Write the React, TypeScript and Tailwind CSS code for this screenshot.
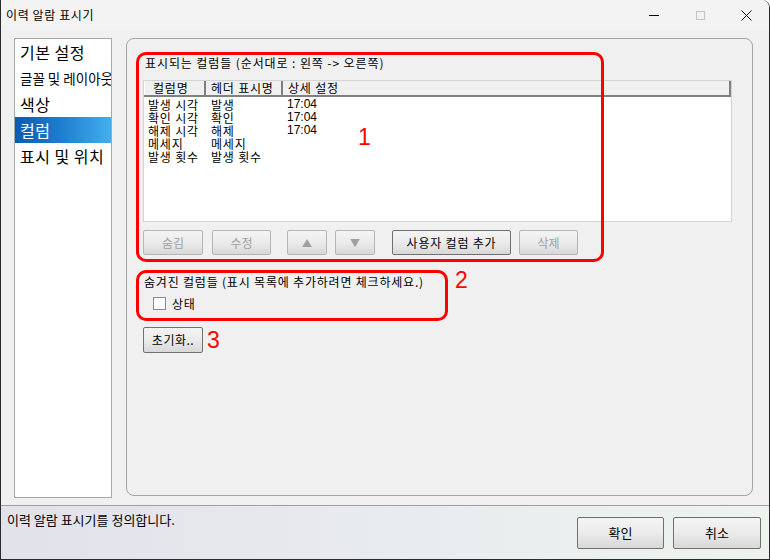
import React from "react";

const rows = [
  { name: "발생 시각", header: "발생", detail: "17:04" },
  { name: "확인 시각", header: "확인", detail: "17:04" },
  { name: "해제 시각", header: "해제", detail: "17:04" },
  { name: "메세지", header: "메세지", detail: "" },
  { name: "발생 횟수", header: "발생 횟수", detail: "" },
];

const menu = [
  { label: "기본 설정", size: "text-[16px] tracking-[0.5px]" },
  { label: "글꼴 및 레이아웃", size: "text-[13.5px]" },
  { label: "색상", size: "text-[16px] tracking-[0.5px]" },
  { label: "컬럼", size: "text-[16px] tracking-[0.5px]", active: true },
  { label: "표시 및 위치", size: "text-[16px] tracking-[0.5px]" },
];

function Btn({
  children,
  disabled,
  className,
}: {
  children: React.ReactNode;
  disabled?: boolean;
  className?: string;
}) {
  return (
    <button
      className={`h-[25px] rounded-[2px] border text-[12px] flex items-center justify-center bg-gradient-to-b from-[#f4f4f4] via-[#ebebeb] to-[#d8d8d8] ${
        disabled ? "border-[#b5b5b5] text-[#a0a0a0]" : "border-[#707070] text-black"
      } ${className ?? ""}`}
    >
      {children}
    </button>
  );
}

export default function App() {
  return (
    <div className="w-[770px] h-[560px] flex flex-col bg-[#f0f0f0] text-black font-['Noto_Sans_CJK_KR',sans-serif] overflow-hidden border-l border-r border-b border-[#2b2b2b] rounded-tr-[8px]">
      {/* title bar */}
      <div className="h-[30px] flex items-center bg-[#f3f3f3] shrink-0">
        <span className="pl-[5px] text-[12px] tracking-[0.6px]">이력 알람 표시기</span>
        <div className="ml-auto flex h-full">
          <div className="w-[46px] h-full flex items-center justify-center">
            <div className="w-[10px] h-[1px] bg-black" />
          </div>
          <div className="w-[46px] h-full flex items-center justify-center">
            <div className="w-[9px] h-[9px] border border-[#c4c4c4]" />
          </div>
          <div className="w-[46px] h-full flex items-center justify-center">
            <svg width="11" height="11" viewBox="0 0 11 11">
              <path d="M0.5 0.5 L10.5 10.5 M10.5 0.5 L0.5 10.5" stroke="#111" strokeWidth="1" />
            </svg>
          </div>
        </div>
      </div>

      {/* main */}
      <div className="flex h-[475px] shrink-0">
        {/* left menu */}
        <div className="ml-[13px] mt-[8px] w-[98px] h-[460px] bg-white border border-[#a8a8a8] overflow-hidden">
          {menu.map((m) => (
            <div
              key={m.label}
              className={`h-[26px] flex items-center pl-[5px] whitespace-nowrap ${m.size} ${
                m.active ? "bg-gradient-to-r from-[#0a5cb0] via-[#1f7fd0] to-[#44aef0] text-white" : ""
              }`}
            >
              {m.label}
            </div>
          ))}
        </div>

        {/* right panel */}
        <div className="relative ml-[14px] mt-[8px] w-[627px] h-[458px] border border-[#a4a4a4] rounded-[8px] pl-[16px] pt-[17px]">
          <div className="ml-[2px] text-[12px] leading-[14px] tracking-[0.9px]">
            표시되는 컬럼들 (순서대로 : 왼쪽 -&gt; 오른쪽)
          </div>

          {/* list view */}
          <div className="mt-[10px] w-[589px] h-[142px] bg-white border border-[#d4d4d4] text-[12px] tracking-[0.8px]">
            <div className="flex h-[16px] leading-[14px] bg-[#f0f0f0] border-b-2 border-[#808080]">
              <div className="w-[62px] pl-[8px] border-r-2 border-[#808080] border-l border-l-white">컬럼명</div>
              <div className="w-[77px] pl-[5px] border-r-2 border-[#808080] whitespace-nowrap">헤더 표시명</div>
              <div className="flex-1 pl-[5px] border-r-2 border-[#808080]">상세 설정</div>
            </div>
            <div className="pt-[1px]">
              {rows.map((r) => (
                <div key={r.name} className="flex h-[13px] leading-[13px]">
                  <div className="w-[62px] pl-[4px] whitespace-nowrap">{r.name}</div>
                  <div className="w-[80px] pl-[5px] whitespace-nowrap">{r.header}</div>
                  <div className="pl-[1px] tracking-normal font-['Liberation_Sans',sans-serif]">{r.detail}</div>
                </div>
              ))}
            </div>
          </div>

          {/* buttons */}
          <div className="flex mt-[8px]">
            <Btn disabled className="w-[60px]">숨김</Btn>
            <Btn disabled className="w-[59px] ml-[9px]">수정</Btn>
            <Btn disabled className="w-[40px] ml-[16px]">
              <span className="text-[10px] text-[#a0a0a0]">▲</span>
            </Btn>
            <Btn disabled className="w-[40px] ml-[8px]">
              <span className="text-[10px] text-[#a0a0a0]">▼</span>
            </Btn>
            <Btn className="w-[119px] ml-[17px] tracking-[0.8px]">사용자 컬럼 추가</Btn>
            <Btn disabled className="w-[59px] ml-[8px]">삭제</Btn>
          </div>

          {/* hidden columns */}
          <div className="mt-[20px] ml-[1px] text-[12px] leading-[14px] tracking-[0.8px]">
            숨겨진 컬럼들 (표시 목록에 추가하려면 체크하세요.)
          </div>
          <div className="flex items-center mt-[8px] ml-[10px] h-[13px]">
            <div className="w-[13px] h-[13px] bg-white border border-[#8a8a8a]" />
            <span className="ml-[6px] text-[12px] tracking-[0.8px]">상태</span>
          </div>

          {/* reset */}
          <div className="flex items-center mt-[17px]">
            <Btn className="w-[60px] h-[26px] tracking-[0.5px]">초기화..</Btn>
            <span className="ml-[4px] text-[23px] leading-[26px] text-[#ff0000] font-['Liberation_Sans',sans-serif]">3</span>
          </div>

          {/* annotations */}
          <div className="absolute left-[9px] top-[13px] w-[468px] h-[210px] border-[3px] border-[#ff0000] rounded-[10px]" />
          <div className="absolute left-[231px] top-[87px] text-[23px] leading-[23px] text-[#ff0000] font-['Liberation_Sans',sans-serif]">1</div>
          <div className="absolute left-[9px] top-[231px] w-[312px] h-[51px] border-[3px] border-[#ff0000] rounded-[10px]" />
          <div className="absolute left-[328px] top-[230px] text-[23px] leading-[23px] text-[#ff0000] font-['Liberation_Sans',sans-serif]">2</div>
        </div>
      </div>

      {/* status bar */}
      <div className="flex-1 flex border-t border-[#a0a0a0] bg-gradient-to-r from-[#e2e2ea] via-[#e8ebef] to-[#eef3ee]">
        <div className="pl-[6px] pt-[7px] text-[13px] leading-[14px]">이력 알람 표시기를 정의합니다.</div>
        <div className="ml-auto flex gap-[9px] pt-[11px] pr-[8px]">
          <Btn className="w-[87px] h-[32px] text-[13px]">확인</Btn>
          <Btn className="w-[88px] h-[32px] text-[13px]">취소</Btn>
        </div>
      </div>
    </div>
  );
}
